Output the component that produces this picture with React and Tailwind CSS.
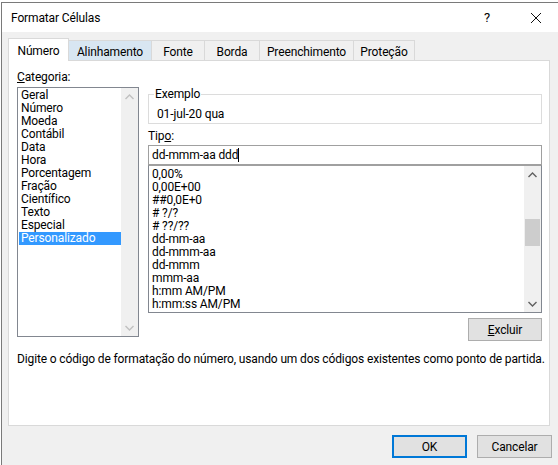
import React from "react";

const categories = [
  "Geral",
  "Número",
  "Moeda",
  "Contábil",
  "Data",
  "Hora",
  "Porcentagem",
  "Fração",
  "Científico",
  "Texto",
  "Especial",
  "Personalizado",
];

const formats = [
  "0,00%",
  "0,00E+00",
  "##0,0E+0",
  "# ?/?",
  "# ??/??",
  "dd-mm-aa",
  "dd-mmm-aa",
  "dd-mmm",
  "mmm-aa",
  "h:mm AM/PM",
  "h:mm:ss AM/PM",
];

const tabs = [
  { label: "Número", w: "w-[61px]" },
  { label: "Alinhamento", w: "w-[84px]" },
  { label: "Fonte", w: "w-[54px]" },
  { label: "Borda", w: "w-[56px]" },
  { label: "Preenchimento", w: "w-[95px]" },
  { label: "Proteção", w: "w-[62px]" },
];

const Chevron = ({ up, color }) => (
  <svg width="9" height="6" viewBox="0 0 9 6" fill="none">
    <path
      d={up ? "M0.5 5 L4.5 1 L8.5 5" : "M0.5 1 L4.5 5 L8.5 1"}
      stroke={color}
      strokeWidth="1.4"
    />
  </svg>
);

const Scrollbar = ({ disabled, thumb }) => (
  <div className="w-[17px] h-full bg-[#f0f0f0] flex flex-col items-center">
    <div className="h-[17px] flex items-center justify-center">
      <Chevron up color={disabled ? "#c0c0c0" : "#606060"} />
    </div>
    <div className="flex-1 w-full flex flex-col">
      {thumb && <div className="mt-[36px] mx-[1px] h-[27px] bg-[#cdcdcd]" />}
    </div>
    <div className="h-[17px] flex items-center justify-center">
      <Chevron color={disabled ? "#c0c0c0" : "#606060"} />
    </div>
  </div>
);

const App = () => {
  return (
    <div className="w-[558px] h-[465px] bg-white overflow-hidden text-[12px] leading-[16px] tracking-[-0.13px] text-black font-['Roboto','Noto_Sans',sans-serif]">
      <div className="ml-[1px] mt-[2px] h-[463px] border-l border-t border-[#7a7a7a] bg-[#f0f0f0] flex flex-col">
        {/* Title bar */}
        <div className="h-[29px] bg-white flex items-center pl-[9px] shrink-0">
          <span className="flex-1">Formatar Células</span>
          <span className="w-[10px] text-[13px] mr-[37px]">?</span>
          <svg width="10" height="10" viewBox="0 0 10 10" className="mr-[17px]">
            <path d="M0 0 L10 10 M10 0 L0 10" stroke="#111" strokeWidth="1" />
          </svg>
        </div>

        {/* Tabs */}
        <div className="mt-[7px] ml-[6px] h-[22px] flex items-end relative z-10 -mb-px">
          {tabs.map((t, i) =>
            i === 0 ? (
              <div
                key={t.label}
                className={`${t.w} h-[23px] bg-white border border-b-0 border-[#d9d9d9] flex items-center justify-center pt-[1px]`}
              >
                {t.label}
              </div>
            ) : (
              <div
                key={t.label}
                className={`${t.w} h-[21px] -ml-px border border-[#d9d9d9] flex items-center justify-center pt-[2px] ${
                  i === 1 ? "bg-[#d8e6f2] border-[#c5d9ea]" : "bg-[#f0f0f0]"
                }`}
              >
                {t.label}
              </div>
            )
          )}
        </div>

        {/* Panel */}
        <div className="ml-[6px] w-[542px] h-[366px] bg-white border border-[#d9d9d9] pl-[8px] pt-[8px] flex flex-col">
          <div className="flex gap-[9px]">
            {/* Categoria */}
            <div className="flex flex-col">
              <div>
                <span className="underline">C</span>ategoria:
              </div>
              <div className="mt-[2px] w-[122px] h-[250px] border border-[#828790] flex">
                <div className="flex-1 pl-[1px] pt-[1px] leading-[13px]">
                  {categories.map((c) => (
                    <div
                      key={c}
                      className={`h-[13px] pl-[2px] ${
                        c === "Personalizado" ? "bg-[#3399ff] text-white" : ""
                      }`}
                    >
                      {c}
                    </div>
                  ))}
                </div>
                <Scrollbar disabled />
              </div>
            </div>

            {/* Right side */}
            <div className="w-[394px] flex flex-col">
              <fieldset className="mt-[17px] border border-[#dcdcdc] pl-[8px] pt-[4px] pb-[1px]">
                <legend className="ml-[-3px] px-[1px]">Exemplo</legend>
                <div>01-jul-20 qua</div>
              </fieldset>

              <div className="mt-[4px]">
                Tip<span className="underline">o</span>:
              </div>
              <div className="mt-[1px] h-[20px] border border-[#a0a0a0] flex items-center pl-[3px]">
                <span>dd-mmm-aa ddd</span>
                <span className="w-px h-[14px] bg-black" />
              </div>
              <div className="h-[148px] border border-[#828790] border-t-[#a0a0a0] flex">
                <div className="flex-1 pl-[3px] pt-[2px] leading-[13px]">
                  {formats.map((f) => (
                    <div key={f} className="h-[13px]">
                      {f}
                    </div>
                  ))}
                </div>
                <Scrollbar thumb />
              </div>
              <div className="flex justify-end mt-[5px]">
                <button className="w-[74px] h-[23px] bg-[#e1e1e1] border border-[#adadad] leading-[16px]">
                  <span className="underline">E</span>xcluir
                </button>
              </div>
            </div>
          </div>

          <div className="mt-[10px] whitespace-nowrap">
            Digite o código de formatação do número, usando um dos códigos existentes como ponto de partida.
          </div>
        </div>

        {/* Bottom buttons */}
        <div className="mt-[9px] flex justify-end gap-[10px] pr-[6px]">
          <button className="w-[75px] h-[23px] bg-[#e1e1e1] border-2 border-[#0078d7] leading-[16px]">
            OK
          </button>
          <button className="w-[75px] h-[23px] bg-[#e1e1e1] border border-[#adadad] leading-[16px]">
            Cancelar
          </button>
        </div>
      </div>
    </div>
  );
};

export default App;
